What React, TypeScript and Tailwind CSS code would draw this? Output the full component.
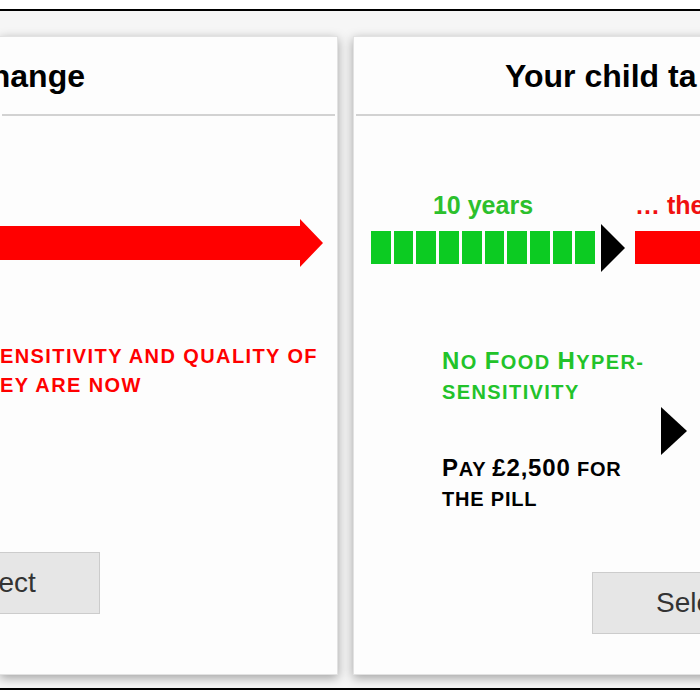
import React from 'react';

const font = "font-['Liberation_Sans',Arial,sans-serif]";

function Triangle({ w }: { w: number }) {
  return (
    <svg width={w} height={48} viewBox={`0 0 ${w} 48`} className="block shrink-0">
      <polygon points={`0,0 ${w},24 0,48`} fill="#000" />
    </svg>
  );
}

function RedArrow() {
  return (
    <svg width={323} height={48} viewBox="0 0 323 48" className="block">
      <polygon points="0,7 300,7 300,0 323,24 300,48 300,41 0,41" fill="#ff0000" />
    </svg>
  );
}

function SelectButton({ className }: { className: string }) {
  return (
    <button
      className={`h-[62px] w-[206px] shrink-0 bg-[#e6e6e6] border border-[#cccccc] text-[28px] text-[#333] ${className}`}
    >
      Select
    </button>
  );
}

function CardHeader({ children, className }: { children: React.ReactNode; className: string }) {
  return (
    <>
      <div className={`h-[77px] flex items-center whitespace-nowrap text-[32px] font-bold text-black ${className}`}>
        {children}
      </div>
      <div className="h-[2px] mx-[2px] bg-[#d2d2d2]" />
    </>
  );
}

export default function App() {
  return (
    <div className={`w-[700px] h-[700px] overflow-hidden bg-white ${font}`}>
      <div className="h-[9px]" />
      <div className="h-[2px] bg-black" />
      <div className="h-[677px] flex gap-[15px] pt-[25px] bg-[#f6f6f6] overflow-hidden">
        {/* left card, cut off by the frame */}
        <div className="w-[338px] h-[639px] shrink-0 bg-[#fdfdfd] border-y border-r border-[#e2e2e2] shadow-[0_3px_10px_rgba(0,0,0,0.35)] overflow-hidden flex flex-col">
          <CardHeader className="justify-end pr-[252px]">hange</CardHeader>
          <div className="mt-[103px]">
            <RedArrow />
          </div>
          <div className="mt-[75px] text-[20px] leading-[29px] font-bold uppercase tracking-[1.4px] text-[#ff0000] whitespace-nowrap">
            <div>ensitivity and quality of</div>
            <div>ey are now</div>
          </div>
          <SelectButton className="mt-[152px] ml-[-106px]" />
        </div>

        {/* right card */}
        <div className="w-[673px] h-[639px] shrink-0 bg-[#fdfdfd] border border-[#e2e2e2] shadow-[0_3px_10px_rgba(0,0,0,0.35)] flex flex-col">
          <CardHeader className="pl-[151px]">Your child ta</CardHeader>

          <div className="mt-[74px] pl-[17px] flex items-start">
            <div className="w-[224px] flex flex-col items-center">
              <div className="text-[25px] leading-[30px] font-bold text-[#2cc02c]">10 years</div>
              <div className="mt-[11px] h-[33px] w-full flex gap-[3px]">
                {Array.from({ length: 10 }).map((_, i) => (
                  <div key={i} className="flex-1 bg-[#0ccb22]" />
                ))}
              </div>
            </div>
            <div className="ml-[6px] mt-[34px]">
              <Triangle w={24} />
            </div>
            <div className="ml-[10px] flex flex-col">
              <div className="text-[25px] leading-[30px] font-bold text-[#f01010] whitespace-nowrap">… the</div>
              <div className="mt-[11px] h-[33px] w-[200px] bg-[#ff0000]" />
            </div>
          </div>

          <div className="mt-[75px] pl-[88px] flex items-center">
            <div className="w-[219px] flex flex-col gap-[47px] font-bold uppercase text-[20px] leading-[30px] whitespace-nowrap">
              <div className="text-[#22c32a] tracking-[1.4px]">
                <div>
                  <span className="text-[24px] leading-none">N</span>o{' '}
                  <span className="text-[24px] leading-none">F</span>ood{' '}
                  <span className="text-[24px] leading-none">H</span>yper-
                </div>
                <div>sensitivity</div>
              </div>
              <div className="text-black tracking-[0.8px]">
                <div>
                  <span className="text-[24px] leading-none">P</span>ay{' '}
                  <span className="text-[24px] leading-none">£2,500</span> for
                </div>
                <div>the pill</div>
              </div>
            </div>
            <Triangle w={26} />
          </div>

          <SelectButton className="mt-[58px] ml-[238px]" />
        </div>
      </div>
      <div className="h-[2px] bg-black" />
    </div>
  );
}
